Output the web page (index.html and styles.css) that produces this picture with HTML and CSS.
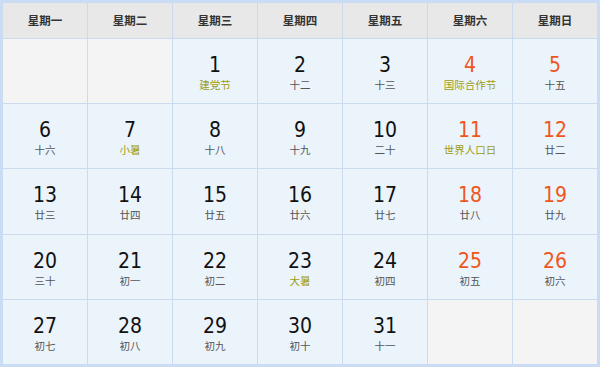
FILE: index.html
```html
<!DOCTYPE html>
<html lang="zh-CN">
<head>
<meta charset="utf-8">
<link rel="stylesheet" href="styles.css">
</head>
<body>
<div class="cal">
  <div class="hd">星期一</div>
  <div class="hd">星期二</div>
  <div class="hd">星期三</div>
  <div class="hd">星期四</div>
  <div class="hd">星期五</div>
  <div class="hd">星期六</div>
  <div class="hd">星期日</div>

  <div class="day empty"></div>
  <div class="day empty"></div>
  <div class="day"><span class="num">1</span><span class="lun fest">建党节</span></div>
  <div class="day"><span class="num">2</span><span class="lun">十二</span></div>
  <div class="day"><span class="num">3</span><span class="lun">十三</span></div>
  <div class="day"><span class="num we">4</span><span class="lun fest">国际合作节</span></div>
  <div class="day"><span class="num we">5</span><span class="lun">十五</span></div>

  <div class="day"><span class="num">6</span><span class="lun">十六</span></div>
  <div class="day"><span class="num">7</span><span class="lun fest">小暑</span></div>
  <div class="day"><span class="num">8</span><span class="lun">十八</span></div>
  <div class="day"><span class="num">9</span><span class="lun">十九</span></div>
  <div class="day"><span class="num">10</span><span class="lun">二十</span></div>
  <div class="day"><span class="num we">11</span><span class="lun fest">世界人口日</span></div>
  <div class="day"><span class="num we">12</span><span class="lun">廿二</span></div>

  <div class="day"><span class="num">13</span><span class="lun">廿三</span></div>
  <div class="day"><span class="num">14</span><span class="lun">廿四</span></div>
  <div class="day"><span class="num">15</span><span class="lun">廿五</span></div>
  <div class="day"><span class="num">16</span><span class="lun">廿六</span></div>
  <div class="day"><span class="num">17</span><span class="lun">廿七</span></div>
  <div class="day"><span class="num we">18</span><span class="lun">廿八</span></div>
  <div class="day"><span class="num we">19</span><span class="lun">廿九</span></div>

  <div class="day"><span class="num">20</span><span class="lun">三十</span></div>
  <div class="day"><span class="num">21</span><span class="lun">初一</span></div>
  <div class="day"><span class="num">22</span><span class="lun">初二</span></div>
  <div class="day"><span class="num">23</span><span class="lun fest">大暑</span></div>
  <div class="day"><span class="num">24</span><span class="lun">初四</span></div>
  <div class="day"><span class="num we">25</span><span class="lun">初五</span></div>
  <div class="day"><span class="num we">26</span><span class="lun">初六</span></div>

  <div class="day"><span class="num">27</span><span class="lun">初七</span></div>
  <div class="day"><span class="num">28</span><span class="lun">初八</span></div>
  <div class="day"><span class="num">29</span><span class="lun">初九</span></div>
  <div class="day"><span class="num">30</span><span class="lun">初十</span></div>
  <div class="day"><span class="num">31</span><span class="lun">十一</span></div>
  <div class="day empty"></div>
  <div class="day empty"></div>
</div>
</body>
</html>
```
FILE: styles.css
```css
* { box-sizing: border-box; }
html, body { margin: 0; padding: 0; background: #ffffff; }
.cal {
  width: 600px;
  height: 367px;
  border: 3px solid #c9dcf3;
  background: #cbdbef;
  display: grid;
  grid-template-columns: repeat(7, 1fr);
  grid-template-rows: 35px repeat(5, 1fr);
  gap: 1px;
}
.hd {
  background: #e8e8e8;
  display: flex;
  align-items: center;
  justify-content: center;
  font-family: "Noto Sans CJK SC", sans-serif;
  font-weight: bold;
  font-size: 11.5px;
  color: #333333;
  padding-bottom: 1px;
}
.day {
  background: #ebf3fb;
  display: flex;
  flex-direction: column;
  align-items: center;
  padding-top: 16px;
}
.day.empty { background: #f4f4f4; }
.num {
  font-family: "DejaVu Sans Condensed", "DejaVu Sans", sans-serif;
  font-stretch: condensed;
  font-size: 21px;
  line-height: 21px;
  color: #111111;
}
.num.we { color: #f0561c; }
.lun {
  font-family: "Noto Sans CJK SC", sans-serif;
  font-size: 10.5px;
  line-height: 14px;
  margin-top: 2px;
  color: #555555;
}
.lun.fest { color: #9d9d12; }
```
